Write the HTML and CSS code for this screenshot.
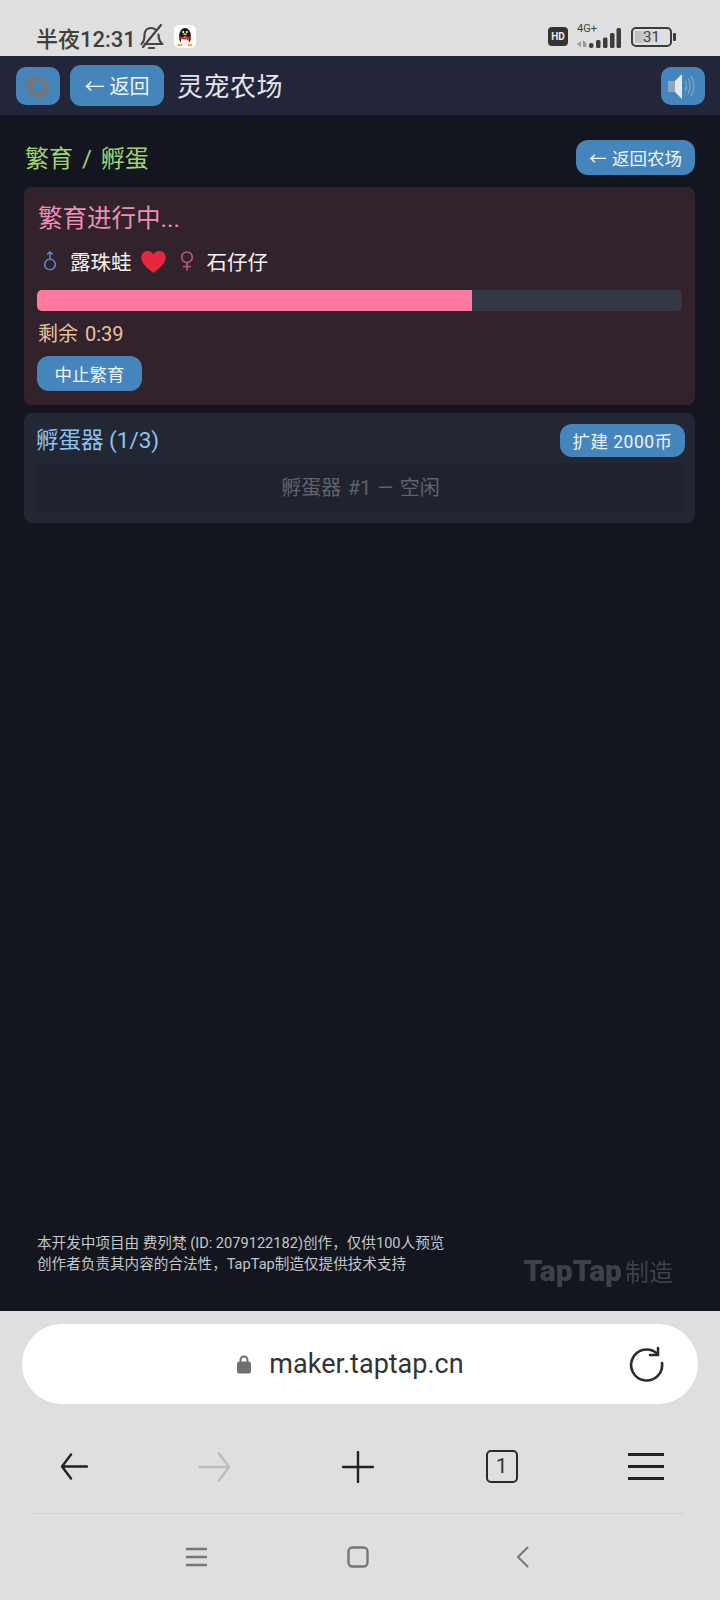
FILE: index.html
```html
<!DOCTYPE html>
<html lang="zh-CN">
<head>
  <meta charset="UTF-8"/>
  <meta name="viewport" content="width=device-width, initial-scale=1.0"/>
  <title>灵宠农场</title>
  <link rel="stylesheet" href="styles.css">
</head>
<body>
  <div class="status-bar">
    <div class="status-left">
      <span class="clock">半夜12:31</span>
      <svg class="bell" width="24" height="26" viewBox="0 0 24 26" fill="none" stroke="#444" stroke-width="2.200" stroke-linecap="round" stroke-linejoin="round">
        <path d="M1.500 20c2.500-2.500 3-4 3-8.500C4.500 6.500 7.500 4 11 4c1.800 0 3.400.6 4.600 1.700M18.500 10.500c0 4.500.8 7 4 9.500H5"/>
        <path d="M9 24h5"/>
        <path d="M21 1 3 23"/>
      </svg>
      <span class="qq">
        <svg width="18" height="20" viewBox="0 0 18 20">
          <ellipse cx="9" cy="9.500" rx="6" ry="8.500" fill="#141414"/>
          <ellipse cx="9" cy="14" rx="4.200" ry="4.500" fill="#fff"/>
          <path d="M3.200 9q5.800 2.500 11.600 0l.4 1.800-2.700 1 .5 2.800-2.200-2.200q-3 .4-7.200-.8z" fill="#e0262a"/>
          <circle cx="7.200" cy="5" r="1.100" fill="#fff"/>
          <circle cx="10.800" cy="5" r="1.100" fill="#fff"/>
          <ellipse cx="9" cy="7.200" rx="2" ry="1" fill="#f2b01e"/>
          <ellipse cx="4" cy="18" rx="2.500" ry="1.300" fill="#f2b01e"/>
          <ellipse cx="14" cy="18" rx="2.500" ry="1.300" fill="#f2b01e"/>
        </svg>
      </span>
    </div>
    <div class="status-right">
      <span class="hd">HD</span>
      <div class="signal">
        <span class="net">4G+</span>
        <svg width="44" height="20" viewBox="0 0 44 20" fill="#3c3c3c">
          <path d="M0 16l4-3v6zM6 12l3.500 3.500V19H6z" fill="#9a9a9a"/>
          <rect x="12" y="15" width="4.500" height="5" rx="2"/>
          <rect x="19" y="12" width="4.500" height="8" rx="1.500"/>
          <rect x="26" y="9.500" width="4.500" height="10.500" rx="1.500"/>
          <rect x="33" y="5" width="4.500" height="15" rx="1.500"/>
          <rect x="39.500" y="0" width="4.500" height="20" rx="1.500"/>
        </svg>
      </div>
      <div class="battery"><span class="battery-level"></span><span class="battery-num">31</span></div>
      <span class="battery-tip"></span>
    </div>
  </div>

  <div class="app">
    <div class="top-bar">
      <button class="btn icon-btn">
        <svg width="28" height="28" viewBox="0 0 28 28">
          <path fill="#6f7780" fill-rule="evenodd" d="M12 2h4l.8 3.400 2.200.9 3-1.800 2.800 2.800-1.800 3 .9 2.200 3.400.8v4l-3.400.8-.9 2.200 1.800 3-2.800 2.800-3-1.800-2.200.9-.8 3.400h-4l-.8-3.400-2.200-.9-3 1.800-2.800-2.800 1.800-3-.9-2.200L-1 16v-4l3.400-.8.9-2.200-1.800-3 2.800-2.800 3 1.800 2.200-.9zM14 8.500a5.500 5.500 0 1 0 0 11 5.500 5.500 0 0 0 0-11z" transform="translate(1.400 1.400) scale(.9)"/>
        </svg>
      </button>
      <button class="btn back-btn">← 返回</button>
      <h1 class="app-title">灵宠农场</h1>
      <button class="btn icon-btn sound-btn">
        <svg width="34" height="30" viewBox="0 0 34 30" fill="none">
          <rect x="2" y="10" width="7" height="11" fill="#93a6b8"/>
          <path d="M9 10 16 3v25l-7-7z" fill="#e3e9ee"/>
          <path d="M19 10q3 5 0 10M22 7q4.500 8 0 16M25 5q6 10 0 20" stroke="#87a7c3" stroke-width="1.200"/>
        </svg>
      </button>
    </div>

    <div class="content">
      <div class="page-head">
        <h2 class="page-title">繁育 / 孵蛋</h2>
        <button class="btn small-btn farm-btn">← 返回农场</button>
      </div>

      <section class="card breed-card">
        <h3 class="breed-title">繁育进行中...</h3>
        <div class="pair">
          <svg class="sex male" width="14" height="20" viewBox="0 0 14 20" fill="none" stroke="#5b83c6" stroke-width="1.600">
            <circle cx="7" cy="13.500" r="5.300"/>
            <path d="M7 8V1M4 3.500 7 1l3 2.500"/>
          </svg>
          <span class="pet">露珠蛙</span>
          <svg class="heart" width="25" height="22" viewBox="0 0 28 25">
            <path fill="#e5273f" d="M14 25C9 21 0 15 0 7.500 0 3 3.500 0 7.500 0 10.500 0 12.800 1.500 14 4c1.200-2.500 3.500-4 6.500-4C24.500 0 28 3 28 7.500 28 15 19 21 14 25z"/>
          </svg>
          <svg class="sex female" width="14" height="20" viewBox="0 0 14 20" fill="none" stroke="#b9597c" stroke-width="1.600">
            <circle cx="7" cy="6.300" r="5.300"/>
            <path d="M7 11.500V19.500M3 15.500h8"/>
          </svg>
          <span class="pet pet-second">石仔仔</span>
        </div>
        <div class="progress"><div class="progress-fill" style="width: 67.500%"></div></div>
        <div class="remain">剩余 0:39</div>
        <button class="btn small-btn stop-btn">中止繁育</button>
      </section>

      <section class="card incubator-card">
        <div class="incubator-head">
          <h3 class="incubator-title">孵蛋器 (1/3)</h3>
          <button class="btn small-btn expand-btn">扩建 2000币</button>
        </div>
        <div class="slot">孵蛋器 #1 — 空闲</div>
      </section>
    </div>

    <div class="notice">
      <div class="notice-text">
        <p>本开发中项目由 费列梵 (ID: 2079122182)创作，仅供100人预览</p>
        <p>创作者负责其内容的合法性，TapTap制造仅提供技术支持</p>
      </div>
      <div class="maker-logo"><b>TapTap</b><span>制造</span></div>
    </div>
  </div>

  <div class="browser">
    <div class="url-bar">
      <div class="url">
        <svg width="16" height="20" viewBox="0 0 16 20">
          <path d="M4.500 9V6a3.500 3.500 0 0 1 7 0v3" fill="none" stroke="#707070" stroke-width="2"/>
          <rect x="1" y="7.500" width="14" height="12" rx="2.500" fill="#707070"/>
        </svg>
        <span>maker.taptap.cn</span>
      </div>
      <svg class="reload" width="36" height="36" viewBox="0 0 36 36" fill="none" stroke="#2b2b2b" stroke-width="2.600" stroke-linecap="round" stroke-linejoin="round">
        <path d="M28 7.500A15.500 15.500 0 1 0 33 17"/>
        <path d="M21 9h8V2"/>
      </svg>
    </div>
    <div class="toolbar">
      <svg width="28" height="27" viewBox="0 0 28 27" fill="none" stroke="#222" stroke-width="2.400" stroke-linecap="round" stroke-linejoin="round">
        <path d="M27 13.500H2M11 1.500 2 13.500l9 12"/>
      </svg>
      <svg width="33" height="30" viewBox="0 0 33 30" fill="none" stroke="#bdbdbd" stroke-width="2.400" stroke-linecap="round" stroke-linejoin="round">
        <path d="M1.500 15h29.500M21 1.500 31 15 21 28.500"/>
      </svg>
      <svg width="32" height="32" viewBox="0 0 32 32" fill="none" stroke="#222" stroke-width="2.400" stroke-linecap="round">
        <path d="M1 16h30M16 1v30"/>
      </svg>
      <div class="tabs">1</div>
      <svg width="36" height="27" viewBox="0 0 36 27" fill="none" stroke="#222" stroke-width="3">
        <path d="M0 1.500h36M0 13.500h36M0 25.500h36"/>
      </svg>
    </div>
    <div class="nav-bar">
      <svg width="21" height="20" viewBox="0 0 21 20" stroke="#777" stroke-width="2.600">
        <path d="M0 2h21M0 10h21M0 18h21"/>
      </svg>
      <svg width="22" height="22" viewBox="0 0 22 22" fill="none" stroke="#777" stroke-width="2.400">
        <rect x="1.500" y="1.500" width="19" height="19" rx="4"/>
      </svg>
      <svg class="nav-back" width="13" height="22" viewBox="0 0 13 22" fill="none" stroke="#777" stroke-width="2" stroke-linecap="round" stroke-linejoin="round">
        <path d="M11.500 1.500 2 11l9.500 9.500"/>
      </svg>
    </div>
  </div>
</body>
</html>
```

FILE: styles.css
```css
* { box-sizing: border-box; }
html, body { margin: 0; padding: 0; }
body { width: 720px; height: 1600px; display: flex; flex-direction: column; background: #13161e; font-family: Roboto, "Noto Sans CJK SC", sans-serif; overflow: hidden; }
h1, h2, h3, p { margin: 0; font-weight: 400; }

/* phone status bar */
.status-bar { height: 56px; flex: none; background: #dfdfdf; display: flex; justify-content: space-between; align-items: center; padding: 17px 44px 0 36px; color: #3e3e3e; }
.status-left, .status-right { display: flex; align-items: center; }
.clock { font-size: 22px; font-weight: 500; }
.bell { margin-left: 4px; }
.qq { width: 22px; height: 23px; margin-left: 10px; background: #fff; border-radius: 5px; display: flex; align-items: center; justify-content: center; }
.hd { width: 20px; height: 19px; background: #333; color: #eee; border-radius: 4px; font-size: 10px; font-weight: 700; text-align: center; line-height: 19px; }
.signal { width: 44px; height: 28px; margin: 0 10px 0 9px; position: relative; }
.net { position: absolute; left: 0; top: 0; font-size: 11px; line-height: 12px; }
.signal svg { position: absolute; left: 0; bottom: 3px; }
.battery { width: 41px; height: 20px; border: 2px solid #3c3c3c; border-radius: 5px; position: relative; display: flex; align-items: center; justify-content: center; overflow: hidden; }
.battery-level { position: absolute; left: 2px; top: 2px; bottom: 2px; width: 24px; background: linear-gradient(90deg, #bdbdbd, #dfdfdf); }
.battery-num { position: relative; font-size: 15px; }
.battery-tip { width: 3px; height: 8px; margin-left: 1px; background: #3c3c3c; border-radius: 1px; }

/* game */
.app { flex: 1; display: flex; flex-direction: column; background: #13161e; }
.top-bar { height: 59px; flex: none; background: #23263a; display: flex; align-items: center; padding: 0 15px 0 16px; }
.btn { background: #4585bb; color: #eef5fb; border: none; font-family: inherit; padding: 0; cursor: pointer; }
.icon-btn { width: 44px; height: 38px; border-radius: 10px; display: flex; align-items: center; justify-content: center; }
.back-btn { width: 94px; height: 41px; margin-left: 10px; border-radius: 11px; font-size: 20px; }
.app-title { margin-left: 13px; padding-bottom: 3px; font-size: 26px; color: #e3e6ec; letter-spacing: .5px; }
.sound-btn { margin-left: auto; }

.content { flex: 1; padding: 25px 25px 0 24px; }
.page-head { display: flex; justify-content: space-between; align-items: center; height: 35px; margin-bottom: 12px; }
.page-title { font-size: 24px; color: #a2d271; padding: 0 0 3px 1px; word-spacing: 3px; }
.small-btn { border-radius: 12px; font-size: 17.500px; }
.farm-btn { width: 119px; height: 35px; word-spacing: 1px; }

.card { border-radius: 8px; }
.breed-card { height: 218px; background: #32222c; padding: 14px 13px; display: flex; flex-direction: column; align-items: flex-start; }
.breed-title { font-size: 24.500px; color: #ee8fb8; line-height: 36px; padding-left: 1px; }
.pair { display: flex; align-items: center; height: 40px; margin-top: 4px; color: #f3f3f5; font-size: 20.500px; }
.male { margin-left: 6px; margin-right: 13px; }
.female { margin-left: 14px; margin-right: 13px; }
.heart { margin: 2px 0 0 9px; }
.progress { width: 645px; height: 22px; margin-top: 9px; background: #333746; border-radius: 5px; overflow: hidden; }
.progress-fill { height: 100%; background: #ff7a9f; }
.remain { margin-top: 10px; font-size: 20px; line-height: 26px; color: #e9c39c; word-spacing: 2px; padding-left: 1px; }
.stop-btn { width: 105px; height: 35px; margin-top: 9px; }

.incubator-card { height: 110px; margin-top: 8px; background: #232734; padding: 11px 10px 10px 12px; }
.incubator-head { display: flex; justify-content: space-between; align-items: center; height: 33px; }
.incubator-title { font-size: 22.500px; color: #8cc3f0; padding-bottom: 5px; }
.expand-btn { width: 125px; height: 33px; letter-spacing: .5px; }
.slot { height: 50px; margin-top: 6px; background: #20232e; border-radius: 6px; text-align: center; line-height: 50px; font-size: 20px; color: #5e636e; word-spacing: 1.500px; }

.notice { height: 93px; flex: none; display: flex; justify-content: space-between; padding: 15px 47px 0 37px; position: relative; }
.notice-text { font-size: 14.600px; line-height: 21px; color: #c5c7cb; white-space: nowrap; }
.maker-logo { margin-top: 19px; color: #3f4149; display: flex; align-items: baseline; filter: blur(.6px); }
.maker-logo b { font-size: 30px; line-height: 38px; font-weight: 900; }
.maker-logo span { font-size: 24px; margin-left: 3px; }

/* browser chrome */
.browser { height: 289px; flex: none; background: #dfdfdf; padding-top: 13px; }
.url-bar { height: 80px; margin: 0 22px; background: #fff; border-radius: 40px; position: relative; display: flex; align-items: center; justify-content: center; }
.url { display: flex; align-items: center; gap: 17px; font-size: 27px; color: #333; padding-right: 20px; }
.reload { position: absolute; right: 33px; top: 22px; }
.toolbar { height: 110px; margin: 0 36px 0 32px; padding: 16px 20px 0 28px; border-bottom: 1px solid #cfcfcf; display: flex; justify-content: space-between; align-items: center; }
.tabs { width: 32px; height: 33px; margin-left: 2px; border: 2.600px solid #2a2a2a; border-radius: 5px; text-align: center; font-size: 21px; line-height: 28px; color: #333; }
.nav-bar { height: 85px; display: flex; align-items: center; gap: 140px; padding-left: 186px; }
.nav-back { margin-left: 7px; }
```
